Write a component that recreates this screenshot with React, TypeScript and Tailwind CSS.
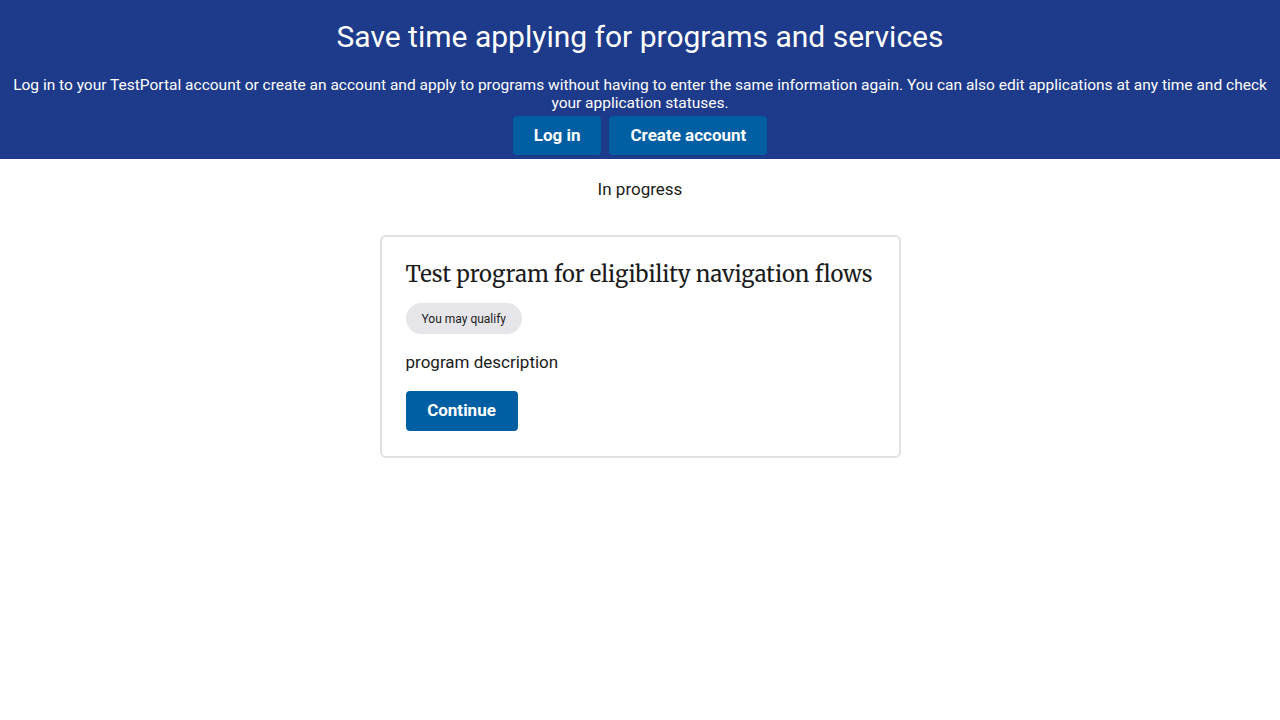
import React from 'react';

const sans = { fontFamily: '"Source Sans Pro", Roboto, "Liberation Sans", sans-serif' };
const serif = { fontFamily: 'Merriweather, "DejaVu Serif", "Liberation Serif", serif' };

function HeaderBanner() {
  return (
    <section className="bg-[#1e3a8a] text-white text-center px-2 pt-4 pb-1 h-[159px]">
      <h1 className="text-[30px] leading-[42px] mb-[18px]">Save time applying for programs and services</h1>
      <p className="text-[15.5px] leading-[18px]">
        Log in to your TestPortal account or create an account and apply to programs without having to enter the same
        information again. You can also edit applications at any time and check your application statuses.
      </p>
      <div className="mt-[4px] flex justify-center gap-2">
        <button className="h-[39px] px-[21px] rounded-[4px] bg-[#005ea2] text-[17px] font-bold">Log in</button>
        <button className="h-[39px] px-[21px] rounded-[4px] bg-[#005ea2] text-[17px] font-bold">Create account</button>
      </div>
    </section>
  );
}

function ProgramCard() {
  return (
    <div className="w-[521px] rounded-[6px] border-2 border-[#dfe1e2] px-6 pt-5 pb-[25px]">
      <h2 className="text-[22px] leading-[34px] text-[#1b1b1b]" style={serif}>
        Test program for eligibility navigation flows
      </h2>
      <span className="mt-[12px] inline-flex h-[31px] items-center rounded-full bg-[#e6e6ea] px-4 text-[12px] text-[#1b1b1b]">
        You may qualify
      </span>
      <p className="mt-[16px] text-[17px] leading-[24px] text-[#1b1b1b]">program description</p>
      <button className="mt-[17px] h-[40px] w-[112px] rounded-[4px] bg-[#005ea2] text-[17px] font-bold text-white">
        Continue
      </button>
    </div>
  );
}

export default function App() {
  return (
    <div className="min-h-screen bg-white" style={sans}>
      <HeaderBanner />
      <main className="flex flex-col items-center">
        <h3 className="mt-[18px] text-[17px] leading-[24px] text-[#1b1b1b]">In progress</h3>
        <div className="mt-[34px]">
          <ProgramCard />
        </div>
      </main>
    </div>
  );
}
